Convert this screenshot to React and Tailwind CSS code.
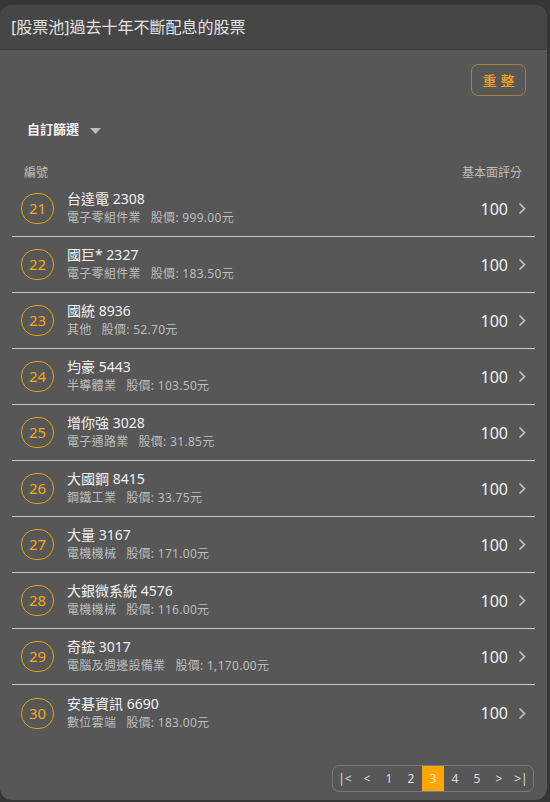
import React from 'react';

const font = { fontFamily: '"Noto Sans", "Noto Sans CJK TC", sans-serif' };

const stocks = [
  { no: 21, name: '台達電', code: '2308', industry: '電子零組件業', price: '999.00' },
  { no: 22, name: '國巨*', code: '2327', industry: '電子零組件業', price: '183.50' },
  { no: 23, name: '國統', code: '8936', industry: '其他', price: '52.70' },
  { no: 24, name: '均豪', code: '5443', industry: '半導體業', price: '103.50' },
  { no: 25, name: '增你強', code: '3028', industry: '電子通路業', price: '31.85' },
  { no: 26, name: '大國鋼', code: '8415', industry: '鋼鐵工業', price: '33.75' },
  { no: 27, name: '大量', code: '3167', industry: '電機機械', price: '171.00' },
  { no: 28, name: '大銀微系統', code: '4576', industry: '電機機械', price: '116.00' },
  { no: 29, name: '奇鋐', code: '3017', industry: '電腦及週邊設備業', price: '1,170.00' },
  { no: 30, name: '安碁資訊', code: '6690', industry: '數位雲端', price: '183.00' },
];

const pages = ['|<', '<', '1', '2', '3', '4', '5', '>', '>|'];

const Chevron = () => (
  <svg width="8" height="13" viewBox="0 0 8 13" className="ml-[10px]">
    <path d="M1.5 1.5 L6.5 6.5 L1.5 11.5" fill="none" stroke="#c4c4c4" strokeWidth="1.6" />
  </svg>
);

const StockRow = ({ stock, last }) => (
  <div className={`h-[56px] shrink-0 flex items-center ${last ? '' : 'border-b border-[#c8c8c8]'}`}>
    <div className="ml-[9px] w-[33px] h-[31px] shrink-0 rounded-[15px] border border-[#e3a21a] flex items-center justify-center text-[15px] text-[#f2a81d]">
      {stock.no}
    </div>
    <div className="ml-[13px] flex-1 flex flex-col">
      <div className="text-[14px] leading-[16px] text-[#f0f0f0]">
        {stock.name} {stock.code}
      </div>
      <div className="text-[12px] leading-[16px] text-[#bdbdbd] mt-[3px] tracking-[0.3px]">
        {stock.industry}
        <span className="ml-[10px]">股價: {stock.price}元</span>
      </div>
    </div>
    <div className="flex items-center pr-[9px]">
      <span className="text-[16px] text-[#f0f0f0]">100</span>
      <Chevron />
    </div>
  </div>
);

export default function App() {
  return (
    <div className="w-[550px] h-[802px] bg-[#363636] overflow-hidden" style={font}>
      <div className="mt-[5px] w-[547px] h-[795px] rounded-xl bg-[#575757] flex flex-col overflow-hidden">
        <div className="h-[45px] shrink-0 bg-[#464646] border-b border-[#3e3e3e] flex items-center pl-[11px]">
          <span className="text-[16px] text-[#e2e2e2]">[股票池]過去十年不斷配息的股票</span>
        </div>

        <div className="flex-1 flex flex-col px-[12px]">
          <div className="flex justify-end pt-[14px] pr-[9px]">
            <button className="w-[55px] h-[32px] rounded-[7px] border border-[#a5803c] text-[14px] tracking-[4px] pl-[4px] text-[#f5a21b] font-medium">
              重整
            </button>
          </div>

          <div className="flex items-center mt-[25px] ml-[15px] h-[18px]">
            <span className="text-[13px] font-bold text-[#f2f2f2]">自訂篩選</span>
            <svg width="11" height="6" viewBox="0 0 11 6" className="ml-[11px] mt-[2px]">
              <path d="M0 0 L11 0 L5.5 6 Z" fill="#bcbcbc" />
            </svg>
          </div>

          <div className="flex justify-between mt-[26px] h-[16px] items-center text-[12px] text-[#bdbdbd] pl-[12px] pr-[13px]">
            <span>編號</span>
            <span>基本面評分</span>
          </div>

          <div className="flex flex-col">
            {stocks.map((s, i) => (
              <StockRow key={s.no} stock={s} last={i === stocks.length - 1} />
            ))}
          </div>

          <div className="flex-1" />

          <div className="flex justify-end mb-[8px] mr-[1px]">
            <div className="flex items-stretch h-[27px] border border-[#7a7a7a] rounded-[7px] px-[1px] overflow-hidden">
              {pages.map((p) => (
                <div
                  key={p}
                  className={`w-[22px] flex items-center justify-center text-[12px] ${
                    p === '3' ? 'bg-[#ffa500] text-[#ffe9b8]' : 'text-[#dedede]'
                  }`}
                >
                  {p}
                </div>
              ))}
            </div>
          </div>
        </div>
      </div>
    </div>
  );
}
